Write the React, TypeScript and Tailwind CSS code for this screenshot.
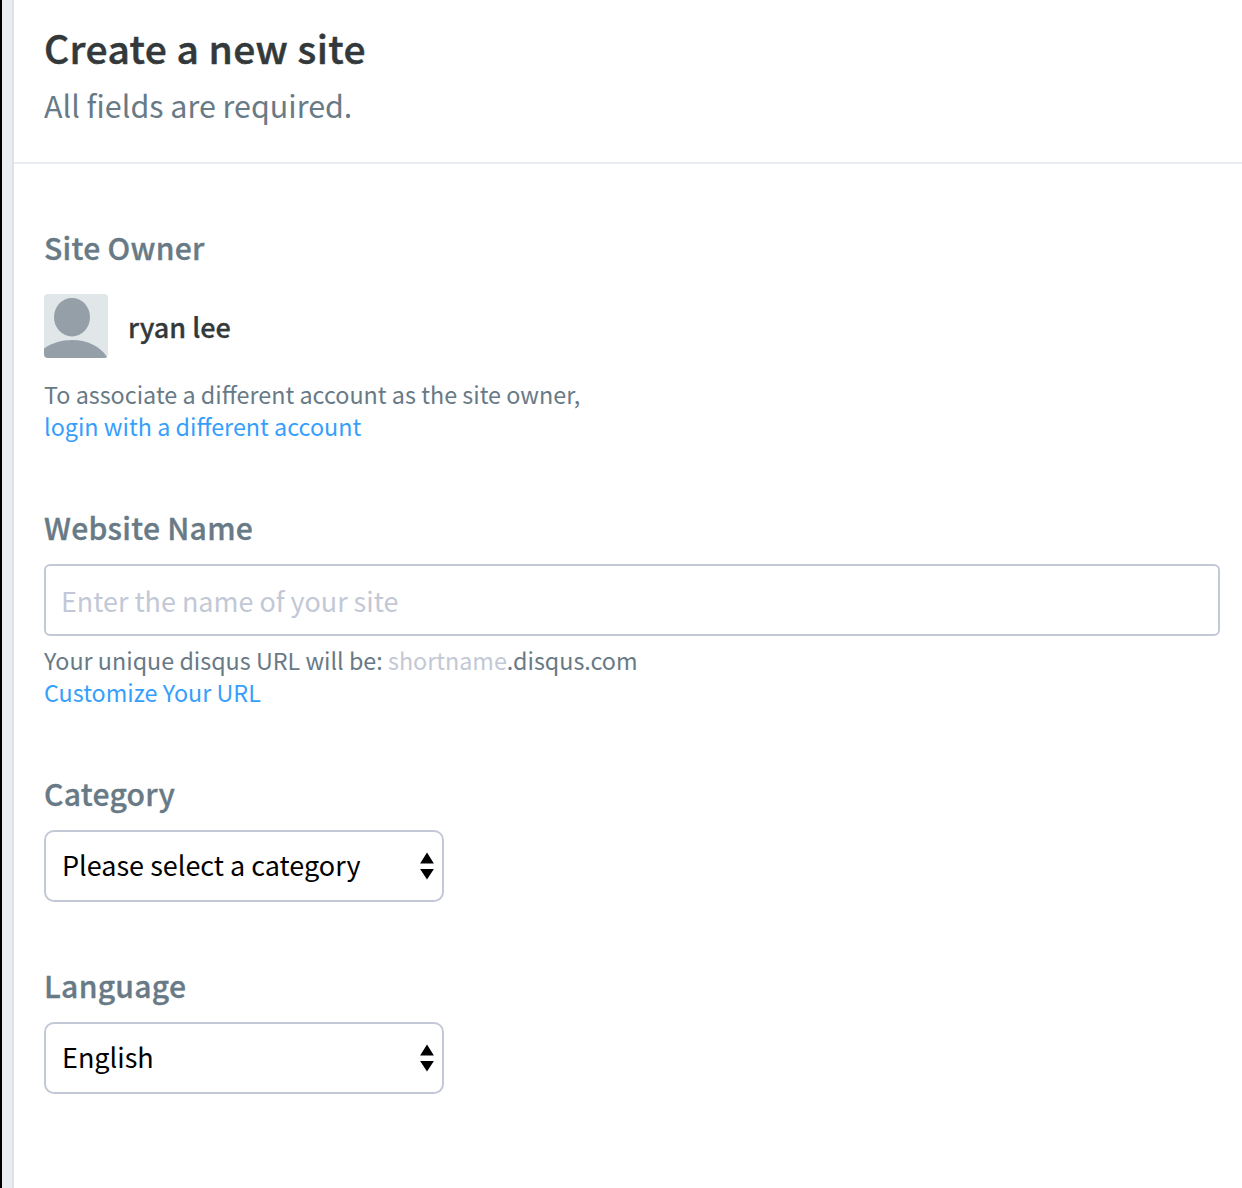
import React from 'react';

function Caret() {
  return (
    <svg width="14" height="28" viewBox="0 0 14 28" className="shrink-0" aria-hidden="true">
      <path d="M7 0.6 13.9 11.4H0.1ZM0.1 17H13.9L7 27.6Z" fill="#000" />
    </svg>
  );
}

function Avatar() {
  return (
    <svg width="64" height="64" viewBox="0 0 64 64" className="shrink-0 rounded-[4px]" aria-hidden="true">
      <rect width="64" height="64" fill="#e1e7e9" />
      <ellipse cx="28" cy="23.2" rx="18" ry="19.2" fill="#949fa8" />
      <path d="M0 54.5C8 49 17 46 28 46c15 0 28 6 35 17V64H0Z" fill="#949fa8" />
    </svg>
  );
}

function FieldTitle({ children }: { children: React.ReactNode }) {
  return (
    <h2 className="text-[30.1px] font-medium leading-[50px] tracking-[0.27px] [-webkit-text-stroke:0.35px_#687a86]">{children}</h2>
  );
}

function Select({ label }: { label: string }) {
  return (
    <button
      type="button"
      className="mt-3 flex h-[72px] w-[400px] items-center justify-between rounded-[10px] border-2 border-[#c2c8d6] bg-white pl-4 pr-2 text-left text-[27px] text-black"
    >
      <span className="-mt-0.5 whitespace-nowrap">{label}</span>
      <Caret />
    </button>
  );
}

export default function App() {
  return (
    <div
      className="flex h-[1188px] w-[1242px] overflow-hidden bg-white text-[#687a86]"
      style={{ fontFamily: '"Noto Sans CJK SC", sans-serif' }}
    >
      <div className="w-[2px] shrink-0 bg-black" />
      <div className="w-[12px] shrink-0 border-r-2 border-[#dfe0ea] bg-[#eaedf2]" />
      <main className="flex-1">
        <header className="h-[164px] border-b-2 border-[#eaedf2] pl-[30px] pt-[17px]">
          <h1 className="text-[39px] font-medium leading-[60px] tracking-[0.4px] text-[#33393b] [-webkit-text-stroke:0.5px_#33393b]">
            Create a new site
          </h1>
          <p className="mt-px text-[30.45px] leading-[54px]">All fields are required.</p>
        </header>
        <form className="pl-[30px] pr-[22px] pt-[58px]">
          <section>
            <FieldTitle>Site Owner</FieldTitle>
            <div className="mt-[22px] flex items-center gap-5">
              <Avatar />
              <span className="pt-0.5 text-[27px] font-medium text-[#33393b] [-webkit-text-stroke:0.3px_#33393b]">ryan lee</span>
            </div>
            <div className="mt-5 text-[23.35px] leading-8">
              <p>To associate a different account as the site owner,</p>
              <a className="text-[#369ffc]">login with a different account</a>
            </div>
          </section>
          <section className="mt-[60px]">
            <FieldTitle>Website Name</FieldTitle>
            <input
              type="text"
              placeholder="Enter the name of your site"
              className="mt-3 block h-[72px] w-full rounded-[6px] border-2 border-[#c2c8d6] px-[15px] text-[26.95px] placeholder:text-[#c2c8d6]"
            />
            <div className="mt-2 text-[23.32px] leading-8">
              <p>
                Your unique disqus URL will be: <span className="text-[#c2c8d6]">shortname</span>.disqus.com
              </p>
              <a className="text-[#369ffc]">Customize Your URL</a>
            </div>
          </section>
          <section className="mt-[60px]">
            <FieldTitle>Category</FieldTitle>
            <Select label="Please select a category" />
          </section>
          <section className="mt-[58px]">
            <FieldTitle>Language</FieldTitle>
            <Select label="English" />
          </section>
        </form>
      </main>
    </div>
  );
}
